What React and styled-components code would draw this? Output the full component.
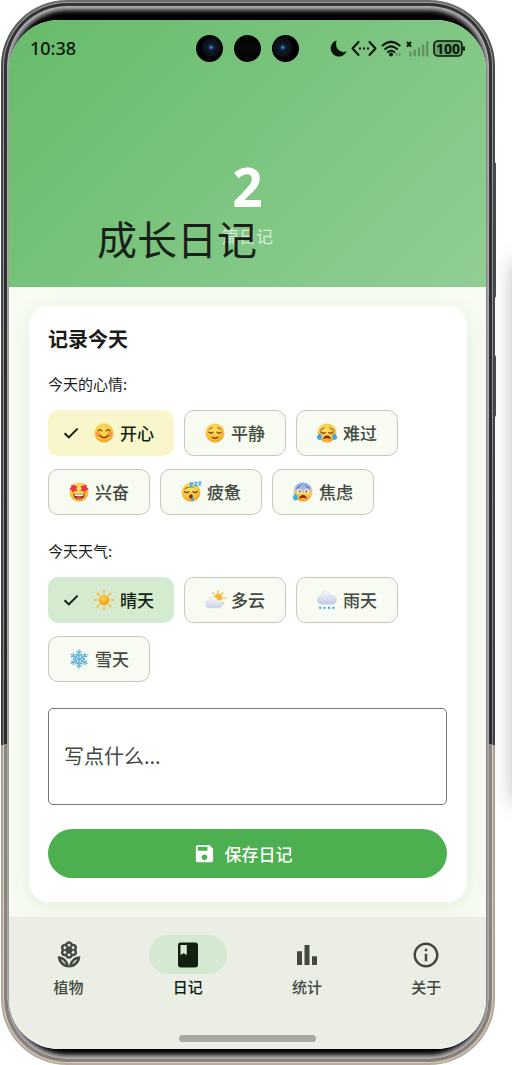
import React, { useState } from "react";
import styled, { createGlobalStyle } from "styled-components";
import { MdBook, MdOutlineInfo, MdOutlineLocalFlorist, MdSave } from "react-icons/md";

const GlobalStyle = createGlobalStyle`
  *, *::before, *::after { box-sizing: border-box; }
  body {
    margin: 0;
    background: #fff;
    color: #1a1c19;
    font-family: "Noto Sans CJK SC", "Noto Sans", sans-serif;
  }
  button, textarea { font-family: inherit; margin: 0; }
`;

const Stage = styled.div`
  position: relative;
  min-height: 100vh;
  padding: 0 17px 0 1px;
  display: flex;
  overflow: hidden;
`;

const PanelShadow = styled.div`
  position: absolute;
  left: 100%;
  top: 262px;
  width: 40px;
  height: 540px;
  box-shadow: 0 0 20px rgba(0, 0, 0, 0.26);
`;

const SideKey = styled.div`
  position: absolute;
  right: 16px;
  top: ${(p) => p.$top}px;
  width: 3px;
  height: ${(p) => p.$height}px;
  border-radius: 0 2px 2px 0;
  background: #4a4b4c;
`;

const Frame = styled.div`
  position: relative;
  flex: 1;
  min-width: 0;
  display: flex;
  padding: 2px;
  border-radius: 66px;
  background: linear-gradient(#6b6e6d 0, #47494b 60px, #3c3f42 70%, #a99e91 70%, #b5aa9d 100%);
`;

const FrameGroove = styled.div`
  flex: 1;
  min-width: 0;
  display: flex;
  padding: 1px;
  border-radius: 64px;
  background: linear-gradient(#9a9c99 0, #85888a 70%, #e0d8cd 70%, #d9d0c4 100%);
`;

const FrameLip = styled.div`
  flex: 1;
  min-width: 0;
  display: flex;
  padding: 3px;
  border-radius: 63px;
  background: linear-gradient(#333 0, #2b2d2f 70%, #8f867c 70%, #8a8178 100%);
`;

const Bezel = styled.div`
  flex: 1;
  min-width: 0;
  display: flex;
  padding: 14px 3px 10px 2px;
  border-radius: 60px;
  background: #000;
  box-shadow: inset 0 0 5px 4px #bdbbbe;
`;

const Screen = styled.div`
  flex: 1;
  min-width: 0;
  display: flex;
  flex-direction: column;
  overflow: hidden;
  border-radius: 50px;
  background: #f7fbf1;
`;

const Header = styled.header`
  position: relative;
  display: flex;
  flex-direction: column;
  align-items: center;
  padding-bottom: 39px;
  background: linear-gradient(135deg, #66bb6a 0%, #91ce94 100%);
`;

const StatusBar = styled.div`
  align-self: stretch;
  height: 56px;
  padding: 0 20px 0 21px;
  display: flex;
  align-items: center;
  justify-content: space-between;
`;

const Clock = styled.span`
  font: 500 18px/24px "Noto Sans", sans-serif;
  color: #0b160b;
`;

const StatusIcons = styled.div`
  display: flex;
  align-items: center;
  gap: 4px;
`;

const Cameras = styled.div`
  position: absolute;
  top: 15px;
  left: 0;
  right: 0;
  display: flex;
  justify-content: center;
  gap: 11px;
`;

const Lens = styled.div`
  width: 27px;
  height: 27px;
  border-radius: 50%;
  background: ${(p) =>
    p.$glass
      ? `radial-gradient(circle at ${p.$glass} 46%, #6fa6dc 0, #29568a 6%, #0d2038 14%, #0a111b 30%, #10151b 38%, #000 46%)`
      : "radial-gradient(circle, #080808 0, #050505 50%, #000 60%)"};
`;

const Count = styled.strong`
  margin-top: 81px;
  font: 700 53px/60px "Noto Sans", sans-serif;
  color: #fff;
`;

const CountLabel = styled.span`
  margin-top: 7px;
  font-size: 17px;
  line-height: 24px;
  color: rgba(255, 255, 255, 0.7);
`;

const PageTitle = styled.h1`
  position: absolute;
  left: 88px;
  top: 188px;
  margin: 0;
  font-size: 40px;
  line-height: 60px;
  font-weight: 400;
  color: #1a1f1a;
`;

const Content = styled.main`
  flex: 1;
  padding: 19px 19px 15px 20px;
`;

const Card = styled.form`
  display: flex;
  flex-direction: column;
  padding: 19px 20px 24px 19px;
  border-radius: 20px;
  background: #fff;
  box-shadow: 0 5px 20px rgba(76, 175, 80, 0.12);
`;

const CardTitle = styled.h2`
  margin: 0;
  font-size: 20px;
  line-height: 28px;
  font-weight: 700;
`;

const GroupLabel = styled.p`
  margin: ${(p) => p.$top}px 0 16px;
  font-size: 15px;
  line-height: 20px;
`;

const Chips = styled.div`
  display: flex;
  flex-wrap: wrap;
  gap: 13px 10px;
`;

const Chip = styled.button`
  display: flex;
  align-items: center;
  height: 46px;
  padding: 0 20px;
  border: 1px solid #c1c9be;
  border-radius: 10px;
  background: #f8fbf2;
  color: #424940;
  font-size: 17px;
  line-height: 24px;
  font-weight: 500;
  cursor: pointer;

  &[aria-pressed="true"] {
    padding: 0 19px 0 12px;
    border-color: transparent;
    background: ${(p) => p.$tint} border-box;
    color: #111f0f;
  }
`;

const ChipCheck = styled.svg`
  width: 20px;
  height: 20px;
  margin-right: 13px;
  fill: none;
  stroke: currentColor;
  stroke-width: 2;
`;

const EmojiSvg = styled.svg`
  width: 20px;
  height: 20px;
  margin-right: 6px;
  overflow: visible;
`;

const Note = styled.textarea`
  display: block;
  width: 100%;
  height: 97px;
  margin-top: 26px;
  padding: 33px 15px;
  resize: none;
  border: 1px solid #72796f;
  border-radius: 5px;
  background: #fff;
  color: #1a1c19;
  font-size: 20px;
  line-height: 28px;
  outline: none;

  &::placeholder { color: #424940; opacity: 1; }
`;

const SaveButton = styled.button`
  display: flex;
  align-items: center;
  justify-content: center;
  gap: 9px;
  height: 49px;
  margin-top: 24px;
  padding: 0 10px 0 0;
  border: 0;
  border-radius: 25px;
  background: #4caf50;
  color: #fff;
  font-size: 17px;
  line-height: 24px;
  font-weight: 500;
  cursor: pointer;

  svg { width: 23px; height: 23px; }
`;

const BottomBar = styled.footer`
  position: relative;
  padding: 18px 0 7px;
  background: #ebeee5;
`;

const Tabs = styled.nav`
  display: flex;
`;

const Tab = styled.a`
  flex: 1;
  display: flex;
  flex-direction: column;
  align-items: center;
  gap: 3px;
  color: #424940;
  font-size: 15px;
  line-height: 20px;
  font-weight: 500;
  text-decoration: none;

  &[aria-current="page"] { color: #111f0f; }
`;

const TabPill = styled.span`
  display: flex;
  align-items: center;
  justify-content: center;
  width: 78px;
  height: 39px;
  border-radius: 20px;
  background: ${(p) => (p.$active ? "#d5e8d0" : "transparent")};

  svg { width: 30px; height: 30px; }
`;

const HomeIndicator = styled.div`
  width: 137px;
  height: 7px;
  margin: 38px auto 0;
  border-radius: 4px;
  background: #a7aaa2;
`;

const stroke = { fill: "none", stroke: "#6b3a12", strokeWidth: 1.5, strokeLinecap: "round", strokeLinejoin: "round" };

const faceGradient = (id, top = "#ffe066", low = "#f59a23") => (
  <radialGradient id={id} cx="45%" cy="32%" r="72%">
    <stop offset="0" stopColor={top} />
    <stop offset="0.6" stopColor="#fcc539" />
    <stop offset="1" stopColor={low} />
  </radialGradient>
);

const emojiArt = {
  happy: (
    <>
      <defs>{faceGradient("face-happy")}</defs>
      <circle cx="12" cy="12" r="11.3" fill="url(#face-happy)" />
      <circle cx="4.8" cy="13.6" r="2.9" fill="#f4704c" opacity="0.5" />
      <circle cx="19.2" cy="13.6" r="2.9" fill="#f4704c" opacity="0.5" />
      <path d="M5 9.5q2.2-3 4.4 0M14.6 9.5q2.2-3 4.4 0M7 15q5 5.2 10 0" {...stroke} />
    </>
  ),
  calm: (
    <>
      <defs>{faceGradient("face-calm")}</defs>
      <circle cx="12" cy="12" r="11.3" fill="url(#face-calm)" />
      <path d="M4.8 7.6q1.6-2 4-2M15.2 5.6q2.4 0 4 2" {...stroke} strokeWidth="1" />
      <path d="M4.6 11q2.5 2.5 5 0M14.4 11q2.5 2.5 5 0M8.4 17.2q3.6 2.2 7.2 0" {...stroke} />
    </>
  ),
  sad: (
    <>
      <defs>{faceGradient("face-sad")}</defs>
      <circle cx="12" cy="12" r="11.3" fill="url(#face-sad)" />
      <path d="M4.4 8.2q3-.4 4.4-2.8M19.6 8.2q-3-.4-4.4-2.8" {...stroke} strokeWidth="1" />
      <path d="M4.6 10.6q2.5 2.8 5.2 1M19.4 10.6q-2.5 2.8-5.2 1" {...stroke} />
      <path d="M7.4 19.6q.6-4.6 4.6-4.6t4.6 4.6q-4.6-2.4-9.2 0z" fill="#7c2d14" />
      <path d="M3.8 12.6q2.9 3.2 1.7 6-1.2 2.2-3.6 1.5-2.6-1-2-3.8.6-2.2 3.9-3.7zM20.2 12.6q-2.9 3.2-1.7 6 1.2 2.2 3.6 1.5 2.6-1 2-3.8-.6-2.2-3.9-3.7z" fill="#38a9f0" />
    </>
  ),
  excited: (
    <>
      <defs>{faceGradient("face-excited")}</defs>
      <circle cx="12" cy="12" r="11.3" fill="url(#face-excited)" />
      <path d="M5.3 2.2l1.7 2.6 3.2.1-1.5 2.8 1.5 2.7-3.4.3-2.3 2.2-1.1-3L.1 8.6l2.5-1.9L3 3.4l2.1.8zM18.7 2.2L17 4.8l-3.2.1 1.5 2.8-1.5 2.7 3.4.3 2.3 2.2 1.1-3 3.3-1.3-2.5-1.9-.4-3.3-2.1.8z" fill="#ef3340" />
      <path d="M5.2 13.8q6.8 1.9 13.6 0-.3 6.8-6.8 6.8t-6.8-6.8z" fill="#702817" />
      <path d="M6.4 14.3q5.6 1.2 11.2 0-.2 2-1.1 2.4-4.5.8-9 0-.9-.4-1.1-2.4z" fill="#fff" />
      <path d="M8.2 19q3.8-2.5 7.6 0-3.8 2.6-7.6 0z" fill="#ec5a58" />
    </>
  ),
  tired: (
    <>
      <defs>{faceGradient("face-tired")}</defs>
      <circle cx="12" cy="12.5" r="11.2" fill="url(#face-tired)" />
      <path d="M4.5 8.3q2-2 4.1-1.8" {...stroke} strokeWidth="1" />
      <path d="M4.4 11.7q2.5 2.2 5 0M14.4 11.7q2.5 2.2 5 0" {...stroke} />
      <ellipse cx="12" cy="17.4" rx="2.3" ry="2.7" fill="#7c2d14" />
      <path d="M14.1 17q2 3 .8 5.3-1.3 1.8-2.4 0-.8-2.2 1.6-5.3z" fill="#37a8ed" />
      <path d="M10 1.2h4.3L10.4 6h4.5M16 .4h3.5l-3.2 4h3.8M21 .1h2.9l-2.5 3.3h2.8" fill="none" stroke="#38aef0" strokeWidth="1.6" strokeLinejoin="round" />
    </>
  ),
  anxious: (
    <>
      <defs>
        <linearGradient id="face-anxious" x2="0" y2="1">
          <stop offset="0" stopColor="#7fa6ee" />
          <stop offset="0.36" stopColor="#b3bdd9" />
          <stop offset="0.58" stopColor="#fdcf4a" />
          <stop offset="1" stopColor="#f59a23" />
        </linearGradient>
      </defs>
      <circle cx="12" cy="12" r="11.3" fill="url(#face-anxious)" />
      <path d="M4.6 7.4q2.7-.4 3.8-2.6M19.4 7.4q-2.7-.4-3.8-2.6" {...stroke} strokeWidth="1" stroke="#39486b" />
      <circle cx="7.8" cy="11.2" r="2.6" fill="#fff" />
      <circle cx="16.2" cy="11.2" r="2.6" fill="#fff" />
      <circle cx="8.1" cy="11.4" r="1.1" fill="#54301a" />
      <circle cx="15.9" cy="11.4" r="1.1" fill="#54301a" />
      <path d="M7.6 20q.4-4.3 4.4-4.3t4.4 4.3q-4.4-2.1-8.8 0z" fill="#7c2d14" />
      <path d="M2.7 13.6q3.7 3.2 3 6.4-1 2.8-3.6 2.2-2.6-.9-2.2-3.9.5-2.2 2.8-4.7z" fill="#32b3f3" />
    </>
  ),
  sunny: (
    <>
      <defs>
        <radialGradient id="sun-disc" cx="42%" cy="36%">
          <stop offset="0" stopColor="#ffd94d" />
          <stop offset="1" stopColor="#f9a21b" />
        </radialGradient>
      </defs>
      <circle cx="12" cy="12" r="6.2" fill="url(#sun-disc)" />
      <path d="M12 .8v2.8M12 20.4v2.8M.8 12h2.8M20.4 12h2.8M4.1 4.1l2 2M17.9 17.9l2 2M4.1 19.9l2-2M17.9 6.1l2-2" stroke="#f8b83c" strokeWidth="2" strokeLinecap="round" />
    </>
  ),
  cloudy: (
    <>
      <defs>
        <linearGradient id="cloud-cloudy" x2="0" y2="1">
          <stop offset="0" stopColor="#fbfcff" />
          <stop offset="1" stopColor="#c9d4e8" />
        </linearGradient>
      </defs>
      <circle cx="15.8" cy="9.2" r="5" fill="#fbb72b" />
      <path d="M15.4 1v1.6M9.5 3.2l1.1 1.4M21.4 3.4l-1.2 1.4M22.3 9.6h1.6M21.4 15.2l1 .9" stroke="#f8b83c" strokeWidth="1.7" strokeLinecap="round" />
      <path d="M5.6 21.5Q.6 21.2.5 16.6q.3-4 4-4.5 1.4-4.1 5.5-4 4.2.3 5.3 4.3 1.3-.8 3.2-.1 3.2 1.4 2.8 4.8-.7 4.1-5.1 4.4z" fill="url(#cloud-cloudy)" stroke="#c5d0e4" strokeWidth="0.5" />
    </>
  ),
  rainy: (
    <>
      <defs>
        <linearGradient id="cloud-rainy" x2="0" y2="1">
          <stop offset="0" stopColor="#f5f8fe" />
          <stop offset="1" stopColor="#bccae0" />
        </linearGradient>
      </defs>
      <path d="M6.2 17.2Q.6 17 .5 12q.2-4.2 3.9-5 1.5-5.3 6.4-5 4.5.5 5.3 4.7 2.4-1.1 5.1.6 2.7 2 2.2 5.2-.9 4.4-5.4 4.7z" fill="url(#cloud-rainy)" stroke="#bfcbe0" strokeWidth="0.5" />
      <g fill="#27a9ef">
        <circle cx="3.7" cy="21.4" r="1.4" />
        <circle cx="9" cy="21.4" r="1.4" />
        <circle cx="14.5" cy="21.4" r="1.4" />
        <circle cx="19.8" cy="21.4" r="1.4" />
      </g>
    </>
  ),
  snowy: (
    <g fill="none" stroke="#5eaed5" strokeWidth="1.5" strokeLinecap="round" strokeLinejoin="round">
      {[0, 60, 120, 180, 240, 300].map((angle) => (
        <path key={angle} transform={`rotate(${angle} 12 12)`} d="M12 12V1M9.5 2.8L12 5.2l2.5-2.4M9 6L12 8.8 15 6" />
      ))}
    </g>
  ),
};

const moods = [
  ["happy", "开心"],
  ["calm", "平静"],
  ["sad", "难过"],
  ["excited", "兴奋"],
  ["tired", "疲惫"],
  ["anxious", "焦虑"],
];

const weathers = [
  ["sunny", "晴天"],
  ["cloudy", "多云"],
  ["rainy", "雨天"],
  ["snowy", "雪天"],
];

const BarsIcon = () => (
  <svg viewBox="0 0 24 24" fill="currentColor" aria-hidden="true">
    <path d="M4 9h4v11H4zM10 4h4v16h-4zM16 13h4v7h-4z" />
  </svg>
);

const tabs = [
  ["plants", "植物", MdOutlineLocalFlorist],
  ["diary", "日记", MdBook],
  ["stats", "统计", BarsIcon],
  ["about", "关于", MdOutlineInfo],
];

function ChipGroup({ label, options, value, onChange, tint }) {
  return (
    <Chips role="group" aria-label={label}>
      {options.map(([id, text]) => (
        <Chip key={id} type="button" $tint={tint} aria-pressed={value === id} onClick={() => onChange(id)}>
          {value === id && (
            <ChipCheck viewBox="0 0 20 20" aria-hidden="true">
              <path d="M3.6 10.2l4.2 4.2 8.8-8.8" />
            </ChipCheck>
          )}
          <EmojiSvg viewBox="0 0 24 24" aria-hidden="true">{emojiArt[id]}</EmojiSvg>
          {text}
        </Chip>
      ))}
    </Chips>
  );
}

function SystemIcons() {
  return (
    <StatusIcons aria-hidden="true">
      <svg width="17" height="17" viewBox="0 0 17 17">
        <path d="M6.6.5A8.2 8.2 0 1 0 16.6 11.2Q12.6 13 9.2 10.6 4.8 6.8 6.6.5z" fill="#0a140a" />
      </svg>
      <svg width="26" height="17" viewBox="0 0 26 17">
        <path d="M7.5 2L1.5 8.5l6 6.5M18.5 2l6 6.5-6 6.5" fill="none" stroke="#0a140a" strokeWidth="2" strokeLinecap="round" strokeLinejoin="round" />
        <path d="M8 7.6h2v2H8zM12 7.6h2v2h-2zM16 7.6h2v2h-2z" fill="#0a140a" />
      </svg>
      <svg width="21" height="17" viewBox="0 0 21 17">
        <path d="M1.6 5.6Q10 -1.8 18.6 5.6M4.2 9q5.9-5.2 11.8 0M6.9 12q3.2-2.6 6.4 0" fill="none" stroke="#0a140a" strokeWidth="2" strokeLinecap="round" />
        <circle cx="10" cy="14.6" r="2" fill="#0a140a" />
        <path d="M14 14.4l2.2-2v4zM20 14.4l-2.2-2v4z" fill="#5f8f60" />
      </svg>
      <svg width="23" height="17" viewBox="0 0 23 17">
        <path d="M1 2l4 4.6M5 2L1 6.6" stroke="#0a140a" strokeWidth="2" />
        <path d="M4.4 12.8v2.4M8.7 10.8v4.4M13 8.4v6.8M17.2 5.4v9.8M21.2 2.2v13" stroke="#609162" strokeWidth="2.4" strokeLinecap="round" />
      </svg>
      <svg width="33" height="17" viewBox="0 0 33 17">
        <rect x="1" y="1" width="28" height="15" rx="4" fill="#66a468" stroke="#0a140a" strokeWidth="1.6" />
        <path d="M31 6.5v4" stroke="#0a140a" strokeWidth="2" />
        <text x="15" y="13.6" textAnchor="middle" fontFamily="Noto Sans, sans-serif" fontSize="14" fontWeight="700" fill="#0a140a">100</text>
      </svg>
    </StatusIcons>
  );
}

export default function App() {
  const [mood, setMood] = useState("happy");
  const [weather, setWeather] = useState("sunny");
  const [tab, setTab] = useState("diary");

  return (
    <>
      <GlobalStyle />
      <Stage>
        <SideKey $top={162} $height={136} />
        <SideKey $top={355} $height={62} />
        <PanelShadow />
        <Frame>
          <FrameGroove>
            <FrameLip>
              <Bezel>
                <Screen>
                  <Header>
                    <StatusBar>
                      <Clock>10:38</Clock>
                      <SystemIcons />
                    </StatusBar>
                    <Cameras>
                      <Lens $glass="56%" />
                      <Lens />
                      <Lens $glass="40%" />
                    </Cameras>
                    <Count>2</Count>
                    <CountLabel>篇日记</CountLabel>
                    <PageTitle>成长日记</PageTitle>
                  </Header>
                  <Content>
                    <Card onSubmit={(e) => e.preventDefault()}>
                      <CardTitle>记录今天</CardTitle>
                      <GroupLabel $top={21}>今天的心情:</GroupLabel>
                      <ChipGroup label="今天的心情" options={moods} value={mood} onChange={setMood} tint="#f9f6cc" />
                      <GroupLabel $top={26}>今天天气:</GroupLabel>
                      <ChipGroup label="今天天气" options={weathers} value={weather} onChange={setWeather} tint="#d5ebd0" />
                      <Note aria-label="写点什么" placeholder="写点什么..." />
                      <SaveButton type="submit">
                        <MdSave aria-hidden="true" />
                        保存日记
                      </SaveButton>
                    </Card>
                  </Content>
                  <BottomBar>
                    <Tabs>
                      {tabs.map(([id, text, Icon]) => (
                        <Tab key={id} href={`#${id}`} aria-current={tab === id ? "page" : undefined} onClick={() => setTab(id)}>
                          <TabPill $active={tab === id}>
                            <Icon aria-hidden="true" />
                          </TabPill>
                          {text}
                        </Tab>
                      ))}
                    </Tabs>
                    <HomeIndicator />
                  </BottomBar>
                </Screen>
              </Bezel>
            </FrameLip>
          </FrameGroove>
        </Frame>
      </Stage>
    </>
  );
}
